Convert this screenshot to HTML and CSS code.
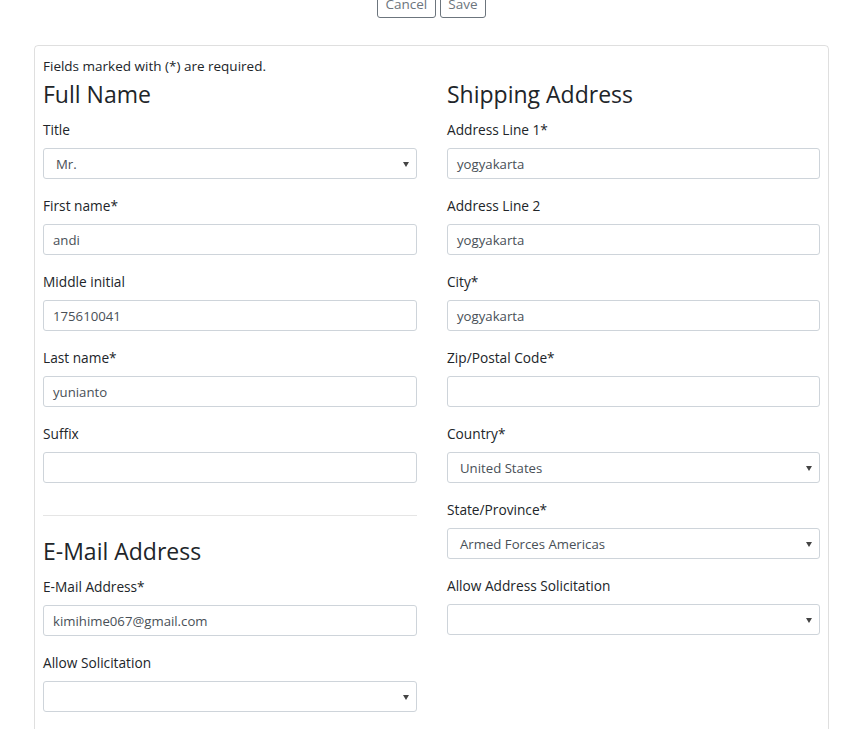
FILE: index.html
```html
<!DOCTYPE html>
<html>
<head>
<meta charset="utf-8">
<link rel="stylesheet" href="styles.css">
</head>
<body>
<div class="actions">
  <button class="btn">Cancel</button>
  <button class="btn">Save</button>
</div>
<div class="card">
  <p class="note">Fields marked with (*) are required.</p>
  <div class="row">
    <div class="col">
      <h4>Full Name</h4>
      <div class="group"><label>Title</label><div class="select">Mr.</div></div>
      <div class="group"><label>First name*</label><div class="input">andi</div></div>
      <div class="group"><label>Middle initial</label><div class="input">175610041</div></div>
      <div class="group"><label>Last name*</label><div class="input">yunianto</div></div>
      <div class="group"><label>Suffix</label><div class="input"></div></div>
      <hr>
      <h4 class="h-email">E-Mail Address</h4>
      <div class="group"><label>E-Mail Address*</label><div class="input">kimihime067@gmail.com</div></div>
      <div class="group"><label>Allow Solicitation</label><div class="select"></div></div>
    </div>
    <div class="col">
      <h4>Shipping Address</h4>
      <div class="group"><label>Address Line 1*</label><div class="input">yogyakarta</div></div>
      <div class="group"><label>Address Line 2</label><div class="input">yogyakarta</div></div>
      <div class="group"><label>City*</label><div class="input">yogyakarta</div></div>
      <div class="group"><label>Zip/Postal Code*</label><div class="input"></div></div>
      <div class="group"><label>Country*</label><div class="select">United States</div></div>
      <div class="group"><label>State/Province*</label><div class="select">Armed Forces Americas</div></div>
      <div class="group"><label>Allow Address Solicitation</label><div class="select"></div></div>
    </div>
  </div>
</div>
</body>
</html>
```
FILE: styles.css
```css
html, body {
  margin: 0;
  padding: 0;
  background: #fff;
  font-family: "Open Sans", "Noto Sans", sans-serif;
  color: #212529;
  font-size: 13px;
  line-height: 1.5;
  overflow: hidden;
}
.actions {
  display: flex;
  gap: 4px;
  padding-left: 377px;
  margin-top: -13px;
}
.btn {
  height: 31px;
  padding: 4px 7.5px 0;
  font-family: inherit;
  font-size: 13.5px;
  color: #6c757d;
  background: #fff;
  border: 1px solid #6c757d;
  border-radius: 3px;
  line-height: 1;
}
.card {
  margin: 27px 0 0 34px;
  width: 795px;
  box-sizing: border-box;
  border: 1px solid rgba(0,0,0,.125);
  border-radius: 4px;
  padding: 10px 8px 40px;
  min-height: 800px;
}
.note {
  margin: 0;
  font-size: 13.5px;
  line-height: 20px;
}
.row {
  display: grid;
  grid-template-columns: 374px 373px;
  column-gap: 30px;
}
h4 {
  font-weight: 400;
  font-size: 23px;
  line-height: 28px;
  margin: 4px 0 11px;
}
.group {
  margin-bottom: 16px;
}
label {
  display: block;
  font-size: 13.7px;
  line-height: 21px;
  margin-bottom: 8px;
}
.input, .select {
  box-sizing: border-box;
  height: 31px;
  border: 1px solid #ced4da;
  border-radius: 3px;
  padding: 0 8px 0 9px;
  font-size: 13.2px;
  line-height: 30px;
  color: #495057;
  position: relative;
}
.select {
  padding-left: 12px;
}
.select::after {
  content: "";
  position: absolute;
  right: 7px;
  top: 13px;
  border-left: 3.5px solid transparent;
  border-right: 3.5px solid transparent;
  border-top: 5px solid #444;
}
hr {
  border: 0;
  border-top: 1px solid rgba(0,0,0,.1);
  margin: 32px 0 21px;
}
.h-email {
  margin-top: 0;
}
```
